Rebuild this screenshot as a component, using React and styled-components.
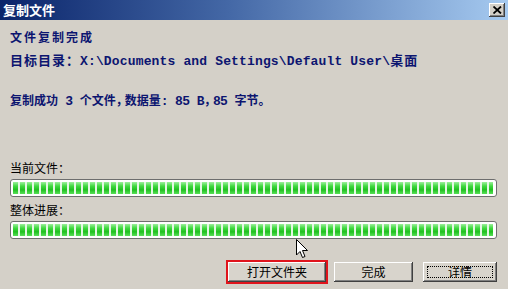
import React from "react";
import styled, { createGlobalStyle } from "styled-components";

const Global = createGlobalStyle`
  html, body { margin: 0; padding: 0; background: #d4d0c8; }
  body { font-family: "Noto Sans CJK SC", "Liberation Sans", sans-serif; }
`;

const Window = styled.div`
  position: relative;
  width: 508px;
  height: 289px;
  background: #d4d0c8;
  display: flex;
  flex-direction: column;
  overflow: hidden;
`;

const TitleBar = styled.div`
  height: 20px;
  background: linear-gradient(to right, #0a246a 0%, #4468a6 45%, #a6caf0 100%);
  display: flex;
  align-items: center;
  justify-content: space-between;
  padding: 0 3px 0 3px;
  box-sizing: border-box;
`;

const Title = styled.span`
  color: #fff;
  font-weight: 700;
  font-size: 13px;
  line-height: 20px;
`;

const CloseBtn = styled.div`
  width: 16px;
  height: 14px;
  background: #d4d0c8;
  box-shadow: inset -1px -1px #404040, inset 1px 1px #fff, inset -2px -2px #808080;
  display: flex;
  align-items: center;
  justify-content: center;
`;

const Content = styled.div`
  display: flex;
  flex-direction: column;
  padding: 0 11px 0 10px;
`;

const Heading = styled.div`
  margin-top: 10px;
  font-size: 12px;
  line-height: 14px;
  font-weight: 700;
  color: #0c1570;
  letter-spacing: 2px;
`;

const MonoLine = styled.div`
  margin-top: ${(p) => p.$mt}px;
  font-size: 13px;
  line-height: 14px;
  font-weight: 700;
  color: #0c1570;
  white-space: nowrap;
  letter-spacing: ${(p) => p.$ls || 0}px;
  font-family: "Liberation Mono", "Noto Sans CJK SC", monospace;
`;

const Cjk = styled.span`
  font-family: "Noto Sans CJK SC", sans-serif;
  font-size: ${(p) => p.$fs || 13}px;
  letter-spacing: ${(p) => p.$ls || 0}px;
`;

const Label = styled.div`
  margin-top: ${(p) => p.$mt}px;
  font-size: 12px;
  line-height: 14px;
  color: #000;
`;

const Bar = styled.div`
  margin-top: 4px;
  height: 18px;
  border: 1px solid #6e6e6e;
  border-radius: 3px;
  background: #fff;
  padding: 2px 3px 2px 2px;
  box-sizing: border-box;
`;

const Fill = styled.div`
  height: 100%;
  background-image: repeating-linear-gradient(
      to right,
      transparent 0px,
      transparent 5px,
      #e4f7e4 5px,
      #e4f7e4 7px
    ),
    linear-gradient(to bottom, #9cf09c 0%, #3fd83f 35%, #20c020 65%, #58e058 100%);
`;

const ButtonRow = styled.div`
  margin-top: 23px;
  display: flex;
  justify-content: flex-end;
`;

const Button = styled.div`
  position: relative;
  width: ${(p) => p.$w}px;
  height: 20px;
  margin-left: ${(p) => p.$ml}px;
  background: #d8d4cc;
  box-shadow: inset -1px -1px #404040, inset 1px 1px #ffffff, inset -2px -2px #808080;
  font-size: 12px;
  line-height: 20px;
  text-align: center;
  color: #000;
  outline: ${(p) => (p.$highlight ? "2px solid #e0141c" : "none")};
`;

const FocusRing = styled.div`
  position: absolute;
  inset: 4px;
  border: 1px dotted #000;
`;

const Cursor = styled.svg`
  position: absolute;
  left: 296px;
  top: 239px;
`;

export default function App() {
  return (
    <>
      <Global />
      <Window>
        <TitleBar>
          <Title>复制文件</Title>
          <CloseBtn>
            <svg width="9" height="8" viewBox="0 0 9 8">
              <path d="M0.5 0.5 L8 7.5 M8 0.5 L0.5 7.5" stroke="#000" strokeWidth="1.8" />
            </svg>
          </CloseBtn>
        </TitleBar>
        <Content>
          <Heading>文件复制完成</Heading>
          <MonoLine $mt={9} $ls={0.15}>
            <Cjk $ls={1}>目标目录：</Cjk>X:\Documents and Settings\Default User\<Cjk $ls={1}>桌面</Cjk>
          </MonoLine>
          <MonoLine $mt={24} $ls={-0.6}>
            <Cjk $fs={12}>复制成功</Cjk> 3 <Cjk $fs={12}>个文件</Cjk>
            <Cjk $fs={12} $ls={-3}>，</Cjk>
            <Cjk $fs={12}>数据量</Cjk>: 85 B<Cjk $fs={12} $ls={-3}>，</Cjk>85 <Cjk $fs={12}>字节。</Cjk>
          </MonoLine>
          <Label $mt={52}>当前文件：</Label>
          <Bar>
            <Fill />
          </Bar>
          <Label $mt={6}>整体进展：</Label>
          <Bar>
            <Fill />
          </Bar>
          <ButtonRow>
            <Button $w={98} $ml={0} $highlight>打开文件夹</Button>
            <Button $w={79} $ml={8}>完成</Button>
            <Button $w={74} $ml={10}>
              <FocusRing />
              详情
            </Button>
          </ButtonRow>
        </Content>
        <Cursor width="13" height="20" viewBox="0 0 13 20">
          <path
            d="M0.5 0.5 L0.5 16 L4 12.5 L6.5 18.5 L9 17.5 L6.5 11.5 L11.5 11.5 Z"
            fill="#fff"
            stroke="#000"
            strokeWidth="1"
          />
        </Cursor>
      </Window>
    </>
  );
}
